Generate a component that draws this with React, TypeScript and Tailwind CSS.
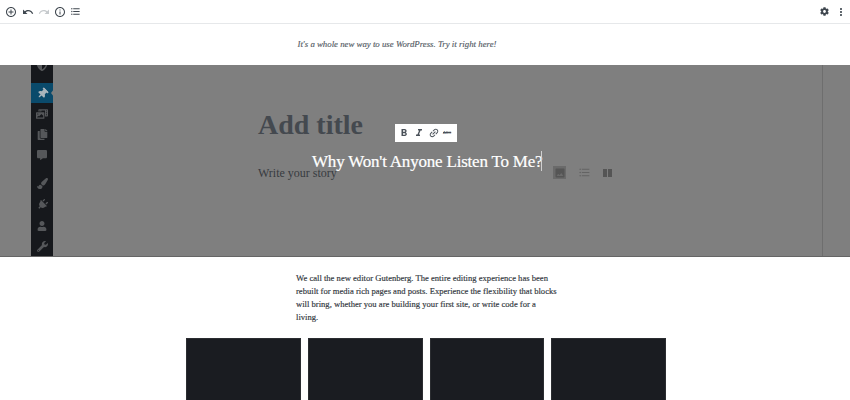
import React from "react";
import { FaThumbtack, FaCopy, FaCommentAlt, FaPaintBrush, FaPlug, FaUser, FaWrench, FaCog, FaPhotoVideo, FaShieldAlt } from "react-icons/fa";
import { MdAddCircleOutline, MdUndo, MdRedo, MdInfoOutline, MdFormatListBulleted, MdMoreVert, MdFormatBold, MdFormatItalic, MdLink, MdImage } from "react-icons/md";

function Side({ children, active, cls }: { children: React.ReactNode; active?: boolean; cls: string }) {
  return (
    <div className={`flex items-center justify-center relative shrink-0 ${cls} ${active ? "bg-[#0a4a6b] text-[#a9b4bb]" : "text-[#55575a]"}`}>
      {children}
      {active && <span className="absolute -right-px top-[6px] w-0 h-0 border-y-[4px] border-y-transparent border-r-[3px] border-r-[#7f7f7f]" />}
    </div>
  );
}

export default function App() {
  return (
    <div className="w-[850px] h-[400px] overflow-hidden bg-white font-['Liberation_Serif',serif]">
      <div className="h-6 border-b border-[#e6e8ea] flex items-center pl-[5px] pr-[3px] text-[#3f474f] box-border">
        <MdAddCircleOutline size={12} />
        <MdUndo size={12} className="ml-[5px]" />
        <MdRedo size={12} className="ml-[4px] text-[#c6cacd]" />
        <MdInfoOutline size={12} className="ml-[4px]" />
        <MdFormatListBulleted size={11} className="ml-[4px]" />
        <FaCog size={9} className="ml-auto mr-[6px]" />
        <MdMoreVert size={12} />
      </div>
      <div className="h-[41px] flex items-center justify-center pr-[56px]">
        <p className="italic text-[8.8px] text-[#555d66] [-webkit-text-stroke:0.15px_#555d66]">It's a whole new way to use WordPress. Try it right here!</p>
      </div>
      <div className="relative h-[192px] bg-[#7f7f7f] border-b border-[#656565] overflow-hidden flex box-border">
        <div className="ml-[31px] w-[22px] bg-[#16181c] shrink-0 flex flex-col">
          <Side cls="h-[18px]"><span className="-mt-[19px]"><FaShieldAlt size={12} /></span></Side>
          <Side active cls="h-[20px]"><FaThumbtack size={11} className="rotate-45" /></Side>
          <Side cls="h-[21px]"><FaPhotoVideo size={12} /></Side>
          <Side cls="h-[20px]"><FaCopy size={11} /></Side>
          <Side cls="h-[22px]"><FaCommentAlt size={10} /></Side>
          <Side cls="h-[28px] pt-[6px]"><FaPaintBrush size={11} /></Side>
          <Side cls="h-[21px]"><FaPlug size={11} className="rotate-45" /></Side>
          <Side cls="h-[21px]"><FaUser size={10} /></Side>
          <Side cls="h-[20px]"><FaWrench size={11} /></Side>
        </div>
        <div className="ml-[205px] flex flex-col">
          <h1 className="mt-[42px] font-bold text-[28px] leading-[36px] text-[#44494f]">Add title</h1>
          <p className="mt-[22px] text-[12px] leading-[16px] text-[#373b40]">Write your story</p>
        </div>
        <div className="ml-auto mr-[27px] w-px bg-[#6e6e6e]" />
        <div className="absolute left-[395px] top-[59px] w-[62px] h-[18px] bg-white flex items-center pl-[3px] gap-[3px] text-[#4a5159]">
          <MdFormatBold size={12} />
          <MdFormatItalic size={12} />
          <MdLink size={12} className="-rotate-45" />
          <span className="text-[4px] line-through font-['Liberation_Sans',sans-serif]">ABC</span>
        </div>
        <div className="absolute left-[312px] top-[86px] h-[22px] flex items-center text-white text-[17px] tracking-[-0.2px] whitespace-nowrap [-webkit-text-stroke:0.2px_white]">
          Why Won't Anyone Listen To Me?
          <span className="absolute left-[229px] top-[0px] w-px h-[20px] bg-[#d0d0d0]" />
        </div>
        <div className="absolute left-[553px] top-[101px] flex items-center">
          <span className="w-[13px] h-[13px] bg-[#6a6a6a] flex items-center justify-center"><MdImage size={12} className="text-[#555]" /></span>
          <MdFormatListBulleted size={13} className="ml-[12px] text-[#636363]" />
          <span className="ml-[12px] flex gap-px">
            <span className="w-[4px] h-[8px] bg-[#555]" />
            <span className="w-[4px] h-[8px] bg-[#555]" />
          </span>
        </div>
      </div>
      <div className="ml-[296px] mt-[15px] whitespace-nowrap text-[8.6px] leading-[13px] text-[#2f353b] [-webkit-text-stroke:0.15px_#2f353b]">
        We call the new editor Gutenberg. The entire editing experience has been<br />
        rebuilt for media rich pages and posts. Experience the flexibility that blocks<br />
        will bring, whether you are building your first site, or write code for a<br />
        living.
      </div>
      <div className="ml-[186px] mt-[14px] flex gap-[7px]">
        {[115, 115, 114, 115].map((w, i) => (
          <div key={i} style={{ width: w }} className="h-[70px] bg-[#1a1c21] border-t border-[#c4c4c4] outline outline-1 -outline-offset-1 outline-[#2b2d31] shrink-0" />
        ))}
      </div>
    </div>
  );
}
